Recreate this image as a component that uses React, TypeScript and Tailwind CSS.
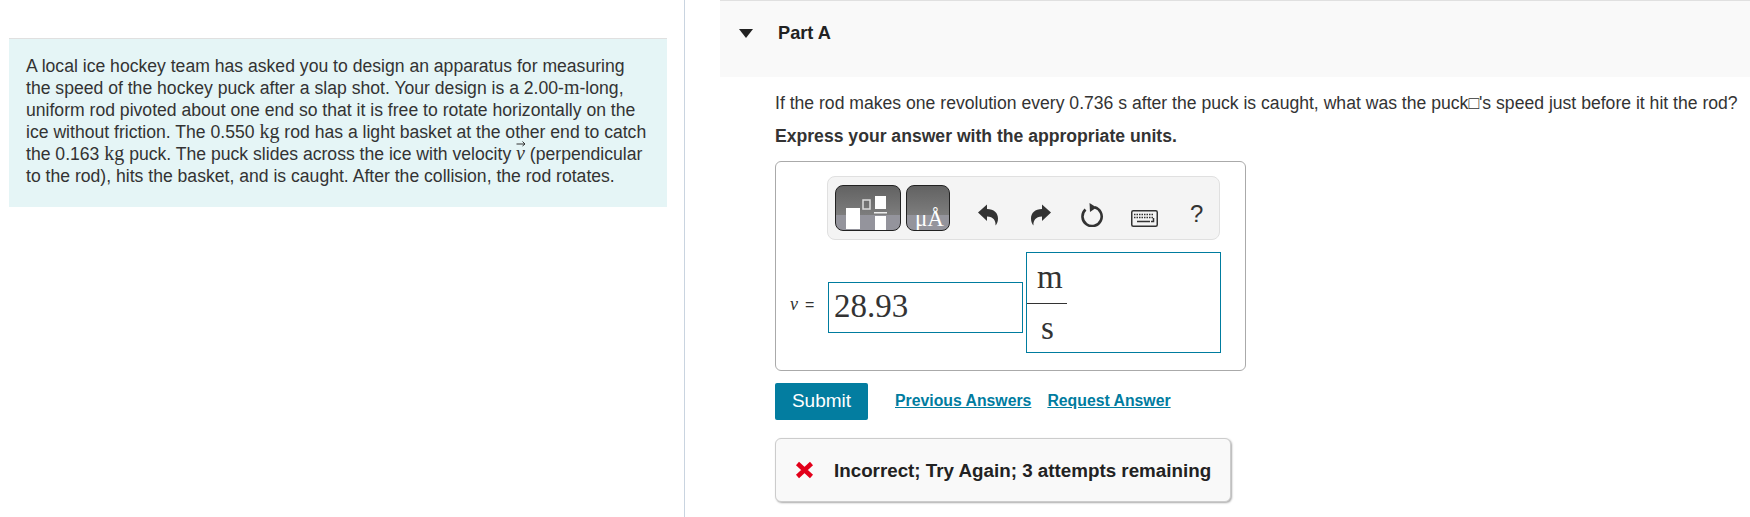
const mathFont = "font-['Liberation_Serif',serif]";

const Kg = () => <span className={`${mathFont} text-[20px] leading-none`}>kg</span>;

const VectorV = () => (
  <span className={`relative inline-block ${mathFont} italic text-[20px] leading-none`}>
    v
    <svg className="absolute left-0 top-[-3px]" width="10" height="7" viewBox="0 0 10 7">
      <path d="M0.5 4H9M6.5 1.5L9 4L6.5 6" fill="none" stroke="#333" strokeWidth="1" />
    </svg>
  </span>
);

const TemplateButton = () => (
  <button className="block w-[66px] h-[46px] rounded-[8px] border border-[#222] bg-[linear-gradient(#626262_0%,#7d7d7d_66%,#94949c_66%)] overflow-hidden">
    <svg width="64" height="44" viewBox="0 0 64 44" className="block">
      <rect x="10" y="22" width="14" height="21" fill="#fff" />
      <rect x="27" y="14" width="7" height="9" fill="none" stroke="#ddd" strokeWidth="1.5" />
      <rect x="39" y="10" width="11" height="13" fill="#fff" />
      <rect x="38" y="26" width="13" height="1.5" fill="#eee" />
      <rect x="39" y="30" width="11" height="14" fill="#fff" />
    </svg>
  </button>
);

const UnitsButton = () => (
  <button className="block relative w-[44px] h-[46px] rounded-[8px] border border-[#222] bg-[linear-gradient(#626262_0%,#7d7d7d_66%,#94949c_66%)] overflow-hidden">
    <span className={`absolute left-[8px] bottom-[0px] ${mathFont} text-[23px] leading-none text-white`}>
      μÅ
    </span>
  </button>
);

const UndoIcon = () => (
  <svg className="block" width="20" height="22" viewBox="0 0 20 22">
    <path
      d="M0 8.5L9 0.5V5C16 5 20 9 20 14.5C20 17.5 19 20 17.5 21.5C18 17 15.5 12.5 9 12.5V17Z"
      fill="#333"
    />
  </svg>
);

const RedoIcon = () => (
  <svg className="block" width="20" height="22" viewBox="0 0 20 22">
    <path
      d="M20 8.5L11 0.5V5C4 5 0 9 0 14.5C0 17.5 1 20 2.5 21.5C2 17 4.5 12.5 11 12.5V17Z"
      fill="#333"
    />
  </svg>
);

const ResetIcon = () => (
  <svg className="block" width="23" height="24" viewBox="0 0 23 24">
    <path d="M13.5 4.2A9.6 9.6 0 1 1 4.5 6.5" fill="none" stroke="#333" strokeWidth="2.6" />
    <path d="M8.5 0L15.5 4.5L9 9Z" fill="#333" />
  </svg>
);

const KeyboardIcon = () => (
  <svg className="block" width="27" height="17" viewBox="0 0 27 17">
    <rect x="0.75" y="0.75" width="25.5" height="15.5" rx="1.5" fill="none" stroke="#333" strokeWidth="1.5" />
    <path d="M3 4.5H23M3 7.5H23" stroke="#333" strokeWidth="1.5" strokeDasharray="1.5 1" />
    <path d="M6 11.5H19M22.5 8V11.5H20" fill="none" stroke="#333" strokeWidth="1.5" />
  </svg>
);

export default function App() {
  return (
    <div className="flex w-[1750px] h-[517px] overflow-hidden bg-white text-[#333] font-['Liberation_Sans',sans-serif]">
      <div className="w-[685px] shrink-0 border-r border-[#c9d4e0] pl-[9px] pr-[17px] pt-[38px]">
        <div className="h-[169px] border-t border-[#e0e0e0] bg-[#e5f5f6] pl-[17px] pt-[16px] text-[17.6px] leading-[22px]">
          <p className="w-[625px]">
            A local ice hockey team has asked you to design an apparatus for measuring the speed of the hockey puck after a
            slap shot. Your design is a 2.00-<span className={`${mathFont} text-[20px] leading-none`}>m</span>-long, uniform rod pivoted
            about one end so that it is free to rotate horizontally on the ice without friction. The 0.550 <Kg /> rod has a
            light basket at the other end to catch the 0.163 <Kg /> puck. The puck slides across the ice with velocity{" "}
            <VectorV /> (perpendicular to the rod), hits the basket, and is caught. After the collision, the rod rotates.
          </p>
        </div>
      </div>

      <div className="flex-1 pl-[35px]">
        <div className="flex items-start h-[77px] border-t border-[#e0e0e0] bg-[#f9f9f9] pt-[21px]">
          <svg className="ml-[19px] mt-[7px]" width="14" height="9" viewBox="0 0 14 9">
            <path d="M0 0H14L7 9Z" fill="#222" />
          </svg>
          <h2 className="ml-[25px] text-[18.2px] leading-[22px] font-bold text-[#222]">Part A</h2>
        </div>

        <div className="pl-[55px]">
          <p className="mt-[14px] text-[17.6px] leading-[24px] whitespace-nowrap">
            If the rod makes one revolution every 0.736 s after the puck is caught, what was the puck□'s speed just before it
            hit the rod?
          </p>
          <p className="mt-[9px] text-[17.6px] leading-[24px] font-bold">Express your answer with the appropriate units.</p>

          <div className="mt-[13px] w-[471px] h-[210px] rounded-[6px] border border-[#aaa] pt-[14px]">
            <div className="ml-[51px] flex items-center w-[393px] h-[64px] rounded-[8px] border border-[#e0e0e0] bg-[#f4f4f4] pl-[7px]">
              <TemplateButton />
              <div className="ml-[5px]">
                <UnitsButton />
              </div>
              <div className="ml-[28px] mt-[14px]">
                <UndoIcon />
              </div>
              <div className="ml-[33px] mt-[14px]">
                <RedoIcon />
              </div>
              <div className="ml-[30px] mt-[14px]">
                <ResetIcon />
              </div>
              <div className="ml-[27px] mt-[20px]">
                <KeyboardIcon />
              </div>
              <span className="ml-[32px] mt-[12px] text-[24px] leading-none text-[#333]">?</span>
            </div>

            <div className="flex items-start mt-[12px]">
              <div className="w-[52px] shrink-0 mt-[42px] pl-[14px] text-[16px] leading-[20px] whitespace-nowrap">
                <span className={`${mathFont} italic text-[18px]`}>v</span>
                <span className="ml-[7px]">=</span>
              </div>
              <div className={`w-[195px] h-[51px] mt-[30px] border border-[#007c9f] pl-[5px] ${mathFont} text-[33px] leading-[46px]`}>
                28.93
              </div>
              <div className={`ml-[3px] w-[195px] h-[101px] border border-[#007c9f] ${mathFont} text-[33px]`}>
                <div className="w-[40px] h-[51px] border-b border-[#333] pl-[10px] leading-[48px]">m</div>
                <div className="pl-[14px] leading-[48px]">s</div>
              </div>
            </div>
          </div>

          <div className="flex items-center mt-[12px]">
            <button className="w-[93px] h-[37px] rounded-[2px] bg-[#037da0] text-[19px] text-white">Submit</button>
            <a className="ml-[27px] text-[15.8px] font-bold text-[#007c9f] underline -mt-[2px]">Previous Answers</a>
            <a className="ml-[16px] text-[15.8px] font-bold text-[#007c9f] underline -mt-[2px]">Request Answer</a>
          </div>

          <div className="flex items-center mt-[18px] w-[456px] h-[64px] rounded-[6px] border border-[#ccc] bg-[#f9f9f9] shadow-[1px_1px_2px_#aaa] pl-[19px]">
            <svg className="shrink-0" width="19" height="18" viewBox="0 0 19 18">
              <path d="M2.5 2.5L16.5 15.5M16.5 2.5L2.5 15.5" stroke="#e2001a" strokeWidth="4.5" />
            </svg>
            <span className="ml-[20px] mt-[3px] text-[18.8px] font-bold text-[#222] whitespace-nowrap">
              Incorrect; Try Again; 3 attempts remaining
            </span>
          </div>
        </div>
      </div>
    </div>
  );
}
